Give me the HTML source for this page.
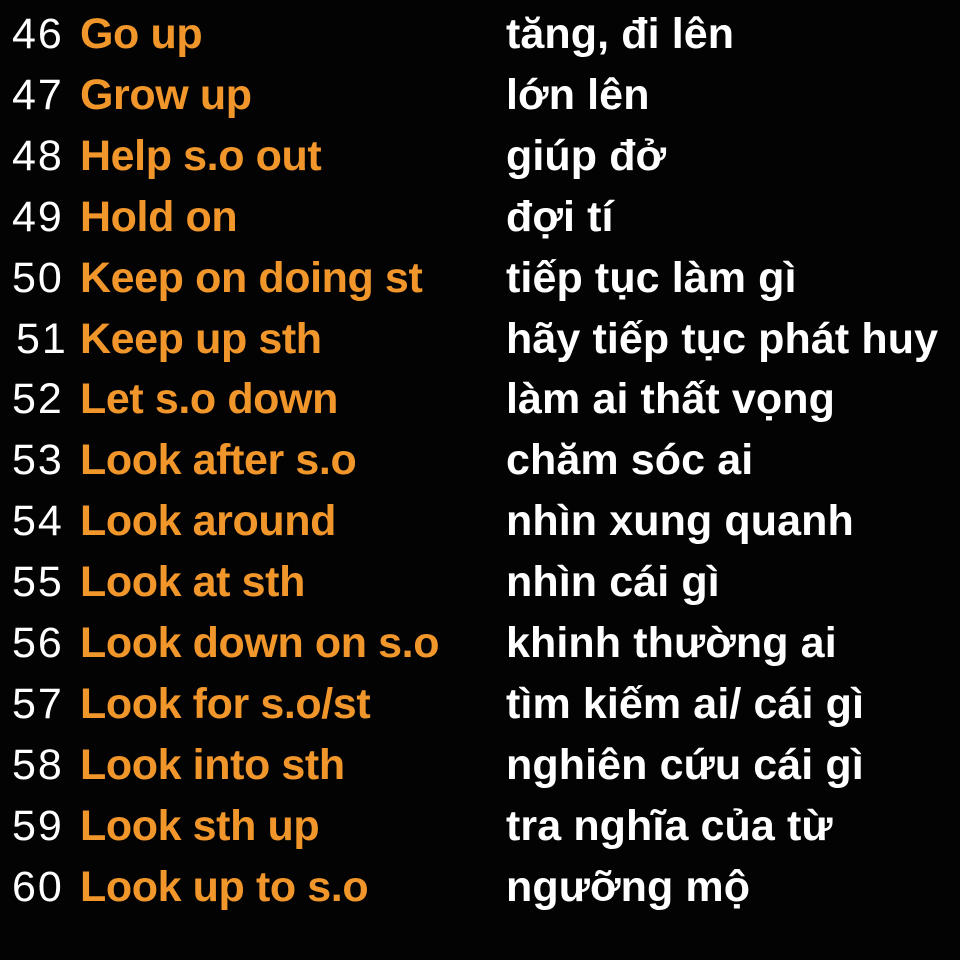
<!DOCTYPE html>
<html><head><meta charset="utf-8"><style>
html,body{margin:0;padding:0;background:#030303;width:960px;height:960px;overflow:hidden}
.r{position:absolute;left:0;height:61px;width:960px;font-family:"Liberation Sans",sans-serif;font-size:43px;line-height:61px;white-space:nowrap}
.n{position:absolute;left:12px;color:#fff;letter-spacing:2px}
.p{position:absolute;left:80px;color:#f0962b;font-weight:bold;letter-spacing:-0.4px}
.v{position:absolute;left:506px;color:#fff;font-weight:bold;letter-spacing:0.1px}
</style></head><body>
<div class="r" style="top:4px"><span class="n">46</span><span class="p">Go up</span><span class="v">tăng, đi lên</span></div>
<div class="r" style="top:65px"><span class="n">47</span><span class="p">Grow up</span><span class="v">lớn lên</span></div>
<div class="r" style="top:126px"><span class="n">48</span><span class="p">Help s.o out</span><span class="v">giúp đở</span></div>
<div class="r" style="top:187px"><span class="n">49</span><span class="p">Hold on</span><span class="v">đợi tí</span></div>
<div class="r" style="top:248px"><span class="n">50</span><span class="p">Keep on doing st</span><span class="v">tiếp tục làm gì</span></div>
<div class="r" style="top:309px"><span class="n" style="left:16px">51</span><span class="p">Keep up sth</span><span class="v">hãy tiếp tục phát huy</span></div>
<div class="r" style="top:369px"><span class="n">52</span><span class="p">Let s.o down</span><span class="v">làm ai thất vọng</span></div>
<div class="r" style="top:430px"><span class="n">53</span><span class="p">Look after s.o</span><span class="v">chăm sóc ai</span></div>
<div class="r" style="top:491px"><span class="n">54</span><span class="p">Look around</span><span class="v">nhìn xung quanh</span></div>
<div class="r" style="top:552px"><span class="n">55</span><span class="p">Look at sth</span><span class="v">nhìn cái gì</span></div>
<div class="r" style="top:613px"><span class="n">56</span><span class="p">Look down on s.o</span><span class="v">khinh thường ai</span></div>
<div class="r" style="top:674px"><span class="n">57</span><span class="p">Look for s.o/st</span><span class="v">tìm kiếm ai/ cái gì</span></div>
<div class="r" style="top:735px"><span class="n">58</span><span class="p">Look into sth</span><span class="v">nghiên cứu cái gì</span></div>
<div class="r" style="top:796px"><span class="n">59</span><span class="p">Look sth up</span><span class="v">tra nghĩa của từ</span></div>
<div class="r" style="top:857px"><span class="n">60</span><span class="p">Look up to s.o</span><span class="v">ngưỡng mộ</span></div>
</body></html>
